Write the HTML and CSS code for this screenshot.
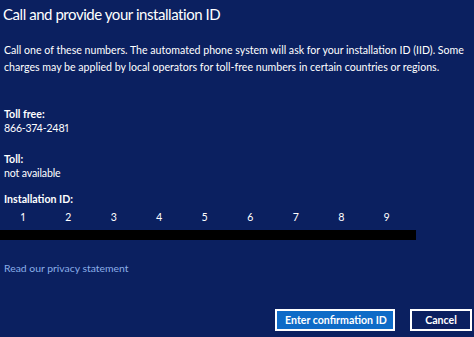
FILE: index.html
```html
<!DOCTYPE html>
<html>
<head>
<meta charset="utf-8">
<link rel="stylesheet" href="styles.css">
</head>
<body>
<div class="page">
  <h1 class="title">Call and provide your installation ID</h1>
  <p class="intro">Call one of these numbers. The automated phone system will ask for your installation ID (IID). Some charges may be applied by local operators for toll-free numbers in certain countries or regions.</p>
  <div class="field first">
    <div class="label">Toll free:</div>
    <div class="value">866-374-2481</div>
  </div>
  <div class="field">
    <div class="label">Toll:</div>
    <div class="value">not available</div>
  </div>
  <div class="field iid">
    <div class="label">Installation ID:</div>
    <div class="cols">
      <span>1</span><span>2</span><span>3</span><span>4</span><span>5</span><span>6</span><span>7</span><span>8</span><span>9</span>
    </div>
    <div class="redact"></div>
  </div>
  <a class="privacy" href="#">Read our privacy statement</a>
  <div class="actions">
    <button class="btn primary">Enter confirmation ID</button>
    <button class="btn">Cancel</button>
  </div>
</div>
</body>
</html>
```
FILE: styles.css
```css
html, body {
  margin: 0;
  padding: 0;
  background: #0b2060;
}
body {
  width: 474px;
  height: 337px;
  overflow: hidden;
  font-family: Lato, "Noto Sans", sans-serif;
  font-variant-numeric: proportional-nums;
  color: #ffffff;
}
.page {
  display: flex;
  flex-direction: column;
  padding: 0 0 0 4px;
  height: 337px;
  box-sizing: border-box;
}
.title {
  margin: 1px 0 0 -1px;
  font-size: 15px;
  font-weight: 400;
  letter-spacing: -0.45px;
  line-height: 26px;
  white-space: nowrap;
}
.intro {
  margin: 15px 0 0 0;
  font-size: 10.6px;
  line-height: 17px;
}
.field {
  display: flex;
  flex-direction: column;
  font-size: 10.6px;
  line-height: 14px;
}
.field.first { margin-top: 31px; }
.field + .field { margin-top: 17px; }
.field.iid { margin-top: 12px; }
.label { font-weight: 700; }
.value { letter-spacing: -0.15px; }
.cols {
  display: grid;
  grid-template-columns: repeat(9, 45.5px);
  margin-left: -4px;
  margin-top: 4px;
}
.cols span { text-align: center; }
.redact {
  margin: 6px 0 0 -4px;
  width: 416px;
  height: 10px;
  background: #000000;
}
.privacy {
  margin-top: 21px;
  font-size: 10.4px;
  line-height: 14px;
  color: #8aaee8;
  text-decoration: none;
  align-self: flex-start;
}
.actions {
  margin-top: auto;
  margin-bottom: 6px;
  display: flex;
  justify-content: flex-end;
  gap: 15px;
  padding-right: 2px;
}
.btn {
  font-family: Lato, "Noto Sans", sans-serif;
  font-size: 10.6px;
  font-weight: 700;
  color: #ffffff;
  background: #0b2060;
  border: 2px solid #ffffff;
  height: 22px;
  padding: 0 8px;
  width: 62px;
  white-space: nowrap;
}
.btn.primary {
  background: #0e6bc7;
  width: 120px;
}
```
